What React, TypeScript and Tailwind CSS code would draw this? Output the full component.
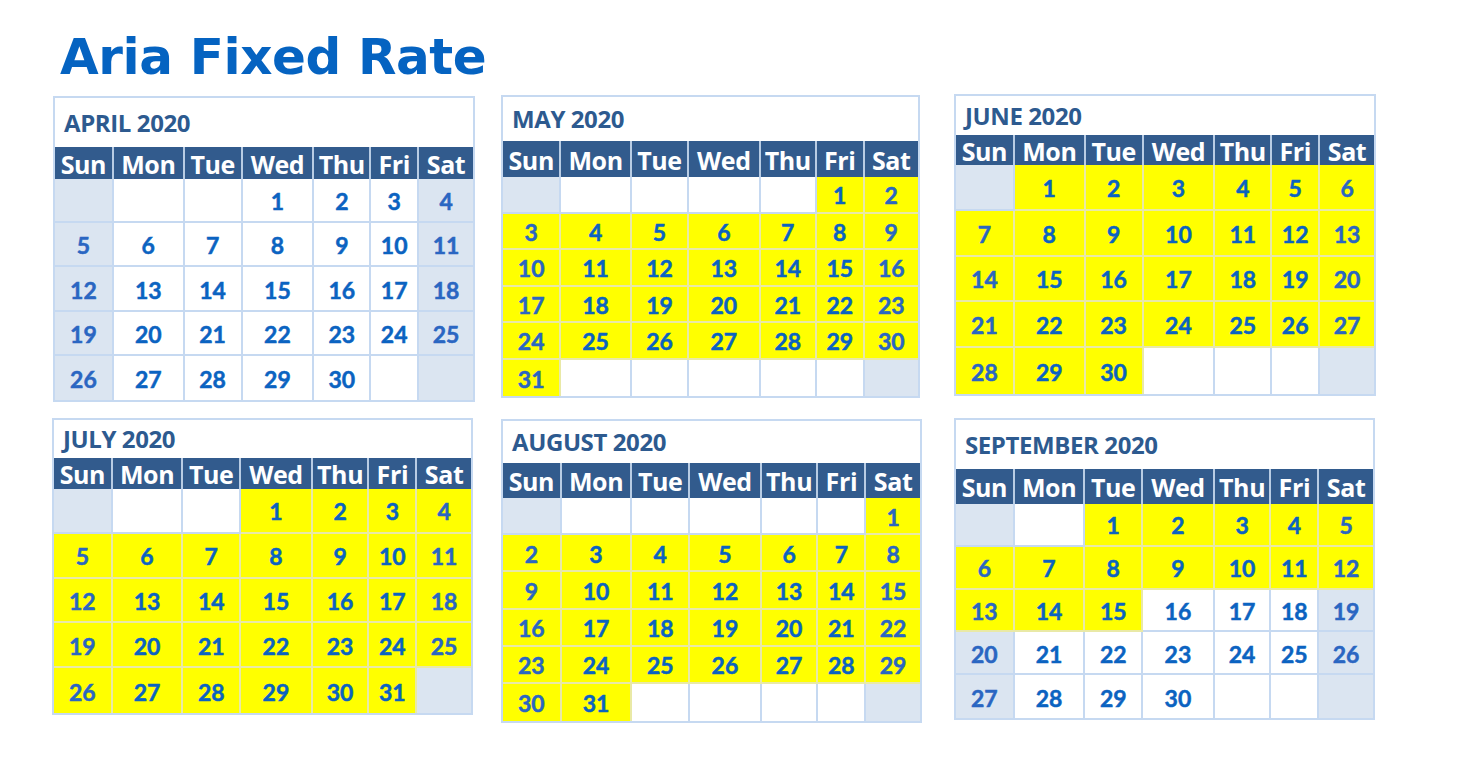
const DAYS = ["Sun", "Mon", "Tue", "Wed", "Thu", "Fri", "Sat"];

type Month = {
  name: string;
  start: number;
  days: number;
  rows: number;
  yellow: (d: number) => boolean;
  box: string;
  title: string;
  head: string;
  body: string;
};

const row1: Month[] = [
  {
    name: "APRIL 2020",
    start: 3,
    days: 30,
    rows: 5,
    yellow: () => false,
    box: "w-[422px] ml-[53px] mt-[2px]",
    title: "h-[49px]",
    head: "h-[32px]",
    body: "h-[221px]",
  },
  {
    name: "MAY 2020",
    start: 5,
    days: 31,
    rows: 6,
    yellow: () => true,
    box: "w-[419px] ml-[26px] mt-[1px]",
    title: "h-[44px]",
    head: "h-[36px]",
    body: "h-[219px]",
  },
  {
    name: "JUNE 2020",
    start: 1,
    days: 30,
    rows: 5,
    yellow: () => true,
    box: "w-[422px] ml-[34px]",
    title: "h-[39px]",
    head: "h-[30px]",
    body: "h-[229px]",
  },
];

const row2: Month[] = [
  {
    name: "JULY 2020",
    start: 3,
    days: 31,
    rows: 5,
    yellow: () => true,
    box: "w-[421px] ml-[52px]",
    title: "h-[38px]",
    head: "h-[31px]",
    body: "h-[224px]",
  },
  {
    name: "AUGUST 2020",
    start: 6,
    days: 31,
    rows: 6,
    yellow: () => true,
    box: "w-[421px] ml-[28px] mt-[1px]",
    title: "h-[42px]",
    head: "h-[35px]",
    body: "h-[223px]",
  },
  {
    name: "SEPTEMBER 2020",
    start: 2,
    days: 30,
    rows: 5,
    yellow: (d) => d <= 15,
    box: "w-[421px] ml-[32px]",
    title: "h-[49px]",
    head: "h-[35px]",
    body: "h-[214px]",
  },
];

const COLS = "grid grid-cols-[59fr_71fr_58fr_72fr_57fr_48fr_54fr]";

function Calendar({ m }: { m: Month }) {
  const weeks: (number | null)[][] = [];
  for (let r = 0; r < m.rows; r++) {
    const week: (number | null)[] = [];
    for (let c = 0; c < 7; c++) {
      const d = r * 7 + c - m.start + 1;
      week.push(d >= 1 && d <= m.days ? d : null);
    }
    weeks.push(week);
  }

  return (
    <div className={`${m.box} flex flex-col border-2 border-[#c6d9f1] bg-white`}>
      <div
        className={`${m.title} flex items-center pl-[9px] font-['Open_Sans',sans-serif] text-[24px] font-bold tracking-[-0.4px] text-[#2d5a8f]`}
      >
        {m.name}
      </div>

      {/* day names */}
      <div className={`${COLS} ${m.head} bg-[#325b8d]`}>
        {DAYS.map((d, i) => (
          <div
            key={d}
            className={`flex items-center justify-center pt-[2px] font-['Open_Sans',sans-serif] text-[25px] font-bold leading-none tracking-[-0.4px] text-white ${
              i < 6 ? "border-r-2 border-[#b8cce4]" : ""
            }`}
          >
            {d}
          </div>
        ))}
      </div>

      <div className={`${m.body} flex flex-col`}>
        {weeks.map((week, r) => (
          <div key={r} className={`${COLS} flex-1`}>
            {week.map((d, c) => {
              const weekend = c === 0 || c === 6;
              const yellow = d !== null && m.yellow(d);
              const bg = yellow
                ? "bg-[#ffff00] border-[#e9e9a6]"
                : weekend
                  ? "bg-[#dbe5f1] border-[#c6d9f1]"
                  : "bg-white border-[#c6d9f1]";
              return (
                <div
                  key={c}
                  className={`${bg} flex items-center justify-center pt-[3px] ${c < 6 ? "border-r-2" : ""} ${
                    r < m.rows - 1 ? "border-b-2" : ""
                  } font-['Lato',sans-serif] text-[23px] font-bold leading-none [-webkit-text-stroke:0.5px_currentColor] ${
                    weekend ? "text-[#2a66c2]" : "text-[#0b63c1]"
                  }`}
                >
                  {d ?? ""}
                </div>
              );
            })}
          </div>
        ))}
      </div>
    </div>
  );
}

export default function App() {
  return (
    <div className="w-[1461px] h-[765px] bg-white overflow-hidden">
      <div className="h-[94px] pt-[32px] pl-[60px] font-['DejaVu_Sans',sans-serif] text-[50px] font-bold leading-[50px] tracking-[-0.4px] text-[#0563c1]">
        Aria Fixed Rate
      </div>
      <div className="flex items-start h-[324px]">
        {row1.map((m) => (
          <Calendar key={m.name} m={m} />
        ))}
      </div>
      <div className="flex items-start">
        {row2.map((m) => (
          <Calendar key={m.name} m={m} />
        ))}
      </div>
    </div>
  );
}
